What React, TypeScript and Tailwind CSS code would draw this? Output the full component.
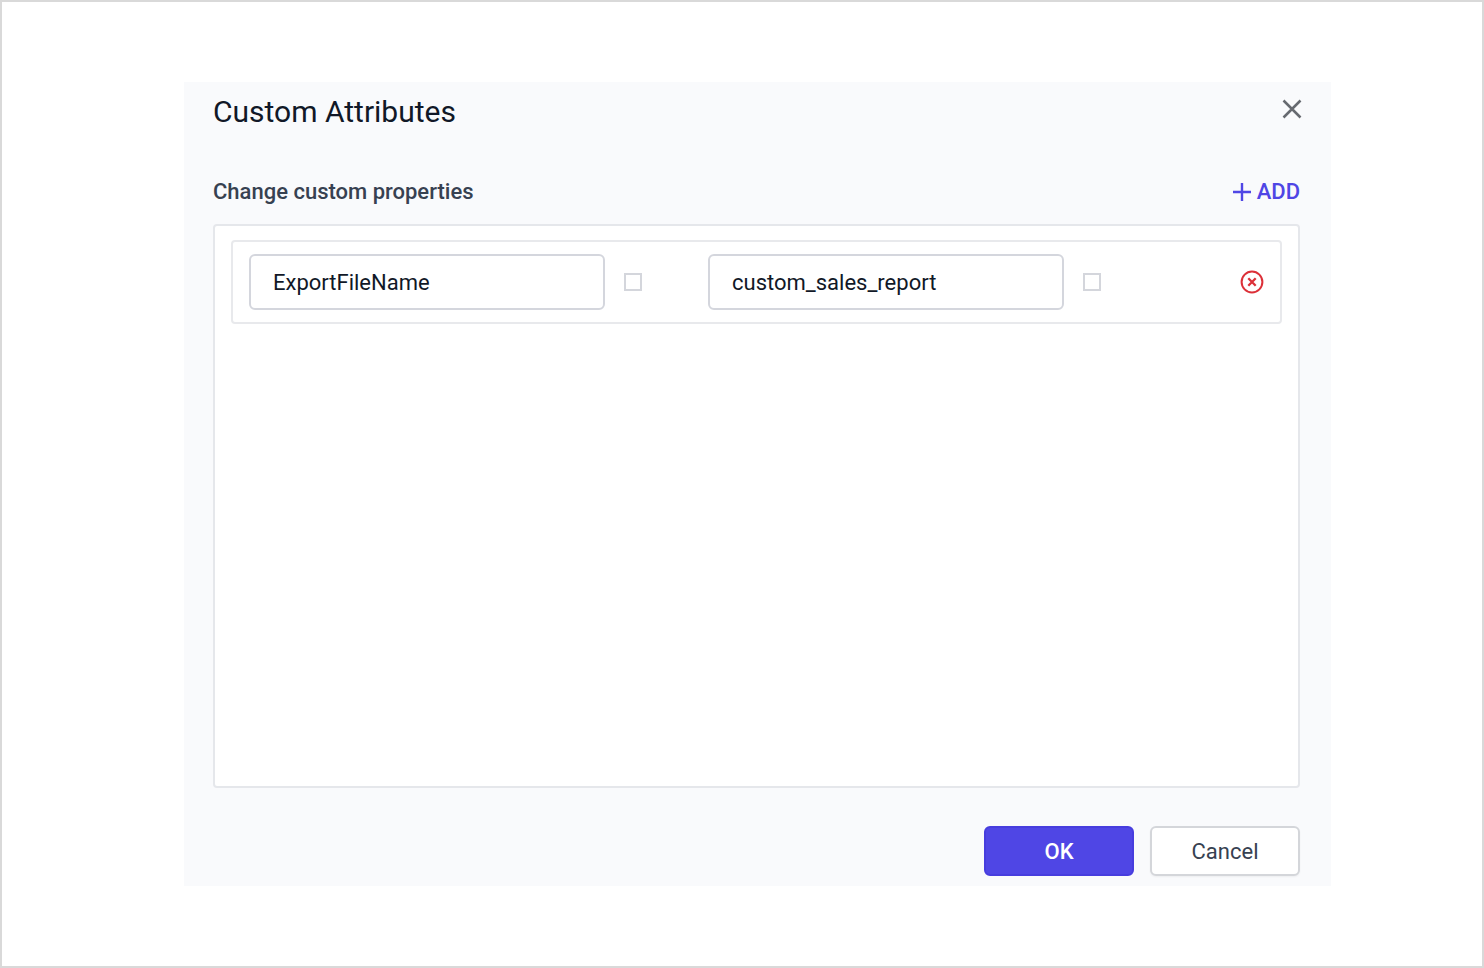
import { useState } from "react";

type Attribute = { id: number; name: string; value: string };

type FieldProps = {
  label: string;
  value: string;
  onChange: (value: string) => void;
};

function ExpressionField({ label, value, onChange }: FieldProps) {
  return (
    <div className="flex items-center gap-[19px]">
      <input
        type="text"
        aria-label={label}
        value={value}
        onChange={(e) => onChange(e.target.value)}
        className="h-14 w-[356px] min-w-0 rounded-md border-2 border-[#d4d6dd] bg-white px-[22px] text-[22px] text-[#111827] outline-none"
      />
      <input
        type="checkbox"
        aria-label={`${label} expression`}
        className="size-[18px] shrink-0 appearance-none border-2 border-[#d4d6dc] bg-white checked:bg-[#4f46e5]"
      />
    </div>
  );
}

function CloseIcon() {
  return (
    <svg viewBox="0 0 20 20" className="size-5" fill="none" stroke="#666a70" strokeWidth="2.5" aria-hidden="true">
      <path d="M1.5 1.5 18.5 18.5M18.5 1.5 1.5 18.5" />
    </svg>
  );
}

function PlusIcon() {
  return (
    <svg viewBox="0 0 18 18" className="size-[18px]" fill="none" stroke="currentColor" strokeWidth="2.4" aria-hidden="true">
      <path d="M9 0V18M0 9H18" />
    </svg>
  );
}

function RemoveIcon() {
  return (
    <svg viewBox="0 0 24 24" className="size-6" fill="none" stroke="#dc3038" aria-hidden="true">
      <circle cx="12" cy="12" r="10.4" strokeWidth="2" />
      <path d="M8.3 8.3 15.7 15.7M15.7 8.3 8.3 15.7" strokeWidth="2.3" />
    </svg>
  );
}

export default function App() {
  const [attributes, setAttributes] = useState<Attribute[]>([
    { id: 1, name: "ExportFileName", value: "custom_sales_report" },
  ]);

  const update = (id: number, patch: Partial<Attribute>) =>
    setAttributes((list) => list.map((a) => (a.id === id ? { ...a, ...patch } : a)));

  const add = () =>
    setAttributes((list) => [...list, { id: Date.now(), name: "", value: "" }]);

  const remove = (id: number) => setAttributes((list) => list.filter((a) => a.id !== id));

  return (
    <main className="flex min-h-screen flex-col border-2 border-[#d9d9d9] bg-white pt-20 pr-[151px] pb-20 pl-[182px] font-[Roboto,sans-serif]">
      <section
        role="dialog"
        aria-labelledby="dialog-title"
        className="flex flex-1 flex-col bg-[#f9fafc] pt-2.5 pr-[31px] pb-2.5 pl-[29px]"
      >
        <header className="flex items-center justify-between">
          <h1 id="dialog-title" className="text-[30px] leading-10 text-[#111827]">
            Custom Attributes
          </h1>
          <button type="button" aria-label="Close" className="-mr-0.5 pb-1.5">
            <CloseIcon />
          </button>
        </header>

        <div className="mt-11 flex items-center justify-between">
          <h2 className="text-[22px] leading-8 font-medium text-[#374151]">Change custom properties</h2>
          <button
            type="button"
            onClick={add}
            className="flex items-center gap-1.5 text-[22px] leading-8 font-medium text-[#4f46e5]"
          >
            <PlusIcon />
            ADD
          </button>
        </div>

        <div className="mt-4 flex flex-1 flex-col gap-4 rounded-sm border-2 border-[#e5e7eb] bg-white px-4 py-3.5">
          {attributes.map((a) => (
            <div
              key={a.id}
              className="flex items-center justify-between rounded-sm border-2 border-[#e8e9ec] bg-white px-4 py-3"
            >
              <div className="flex items-center gap-[66px]">
                <ExpressionField
                  label="Attribute name"
                  value={a.name}
                  onChange={(name) => update(a.id, { name })}
                />
                <ExpressionField
                  label="Attribute value"
                  value={a.value}
                  onChange={(value) => update(a.id, { value })}
                />
              </div>
              <button type="button" aria-label="Remove attribute" onClick={() => remove(a.id)}>
                <RemoveIcon />
              </button>
            </div>
          ))}
        </div>

        <footer className="mt-[38px] flex justify-end gap-4">
          <button
            type="button"
            className="h-[50px] w-[150px] rounded-md border-2 border-[#473dde] bg-[#4f46e5] text-[22px] font-medium text-white"
          >
            OK
          </button>
          <button
            type="button"
            className="h-[50px] w-[150px] rounded-md border-2 border-[#d4d6da] bg-white text-[22px] text-[#374151] shadow-xs"
          >
            Cancel
          </button>
        </footer>
      </section>
    </main>
  );
}
